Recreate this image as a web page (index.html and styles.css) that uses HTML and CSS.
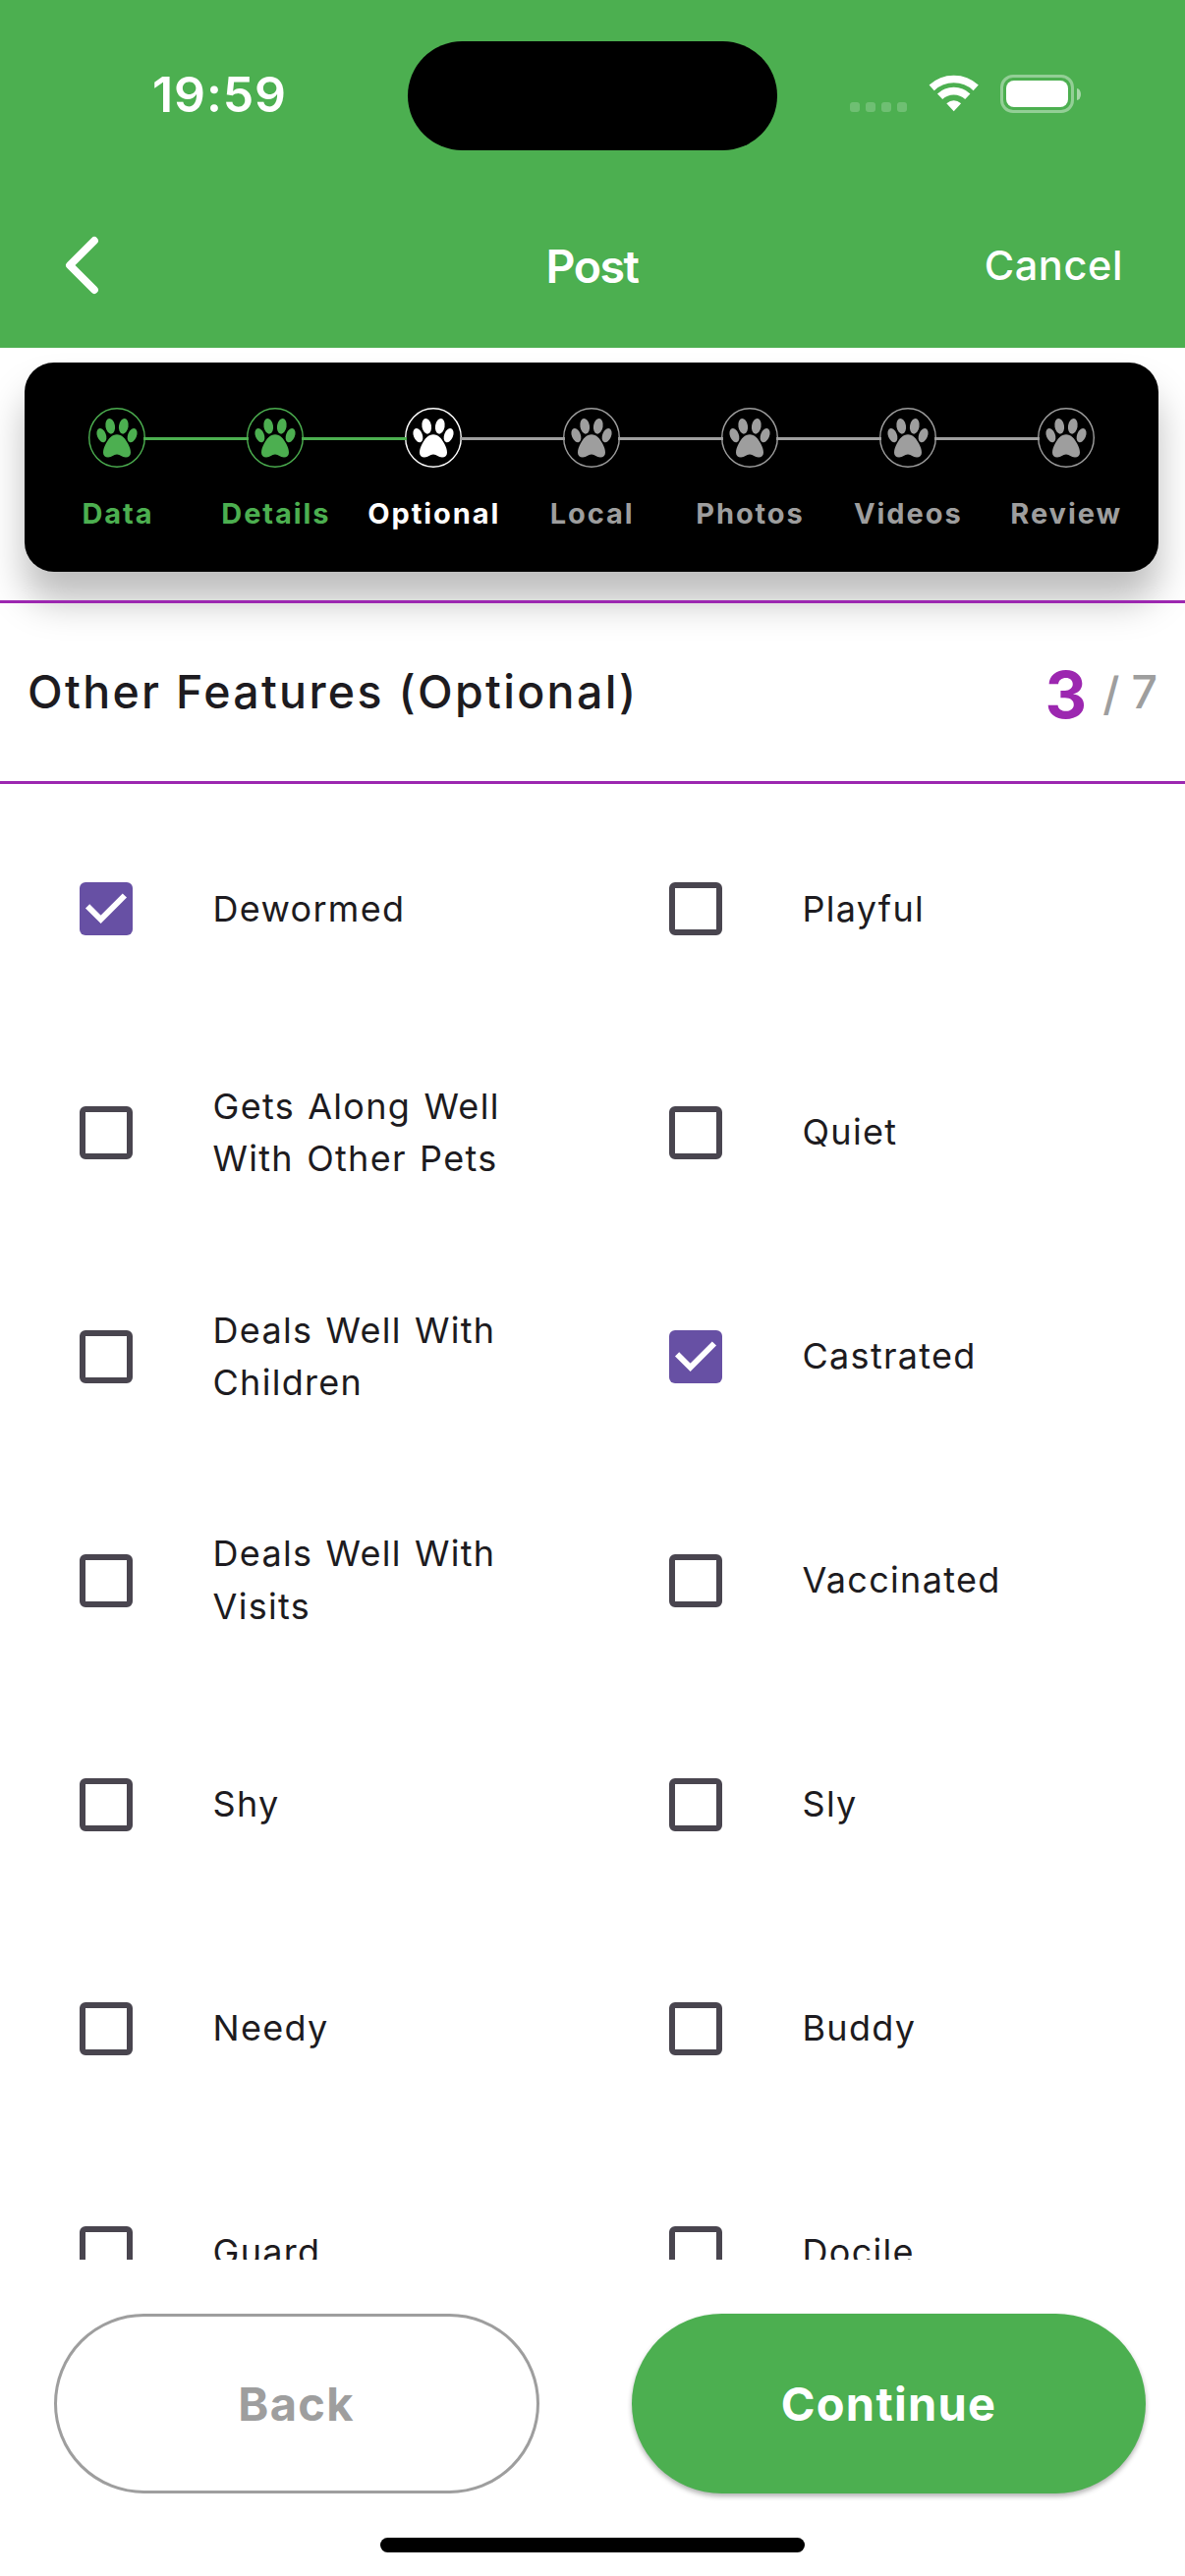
FILE: index.html
```html
<!DOCTYPE html>
<html lang="en">
<head>
<meta charset="utf-8">
<title>Post</title>
<link rel="stylesheet" href="styles.css">
</head>
<body>
<svg width="0" height="0" class="defs">
  <symbol id="paw" viewBox="0 0 58 61">
    <ellipse cx="29" cy="30.5" rx="28.3" ry="29.7" fill="none" stroke="currentColor" stroke-width="1.4"/>
    <g fill="currentColor">
      <ellipse cx="13.4" cy="28.1" rx="4.5" ry="7.4" transform="rotate(-22 13.4 28.1)"/>
      <ellipse cx="22.2" cy="18.8" rx="4.8" ry="7.9" transform="rotate(-9 22.2 18.8)"/>
      <ellipse cx="35.8" cy="18.8" rx="4.8" ry="7.9" transform="rotate(9 35.8 18.8)"/>
      <ellipse cx="44.6" cy="28.1" rx="4.5" ry="7.4" transform="rotate(22 44.6 28.1)"/>
      <path d="M29 27.3C24 27.3 20.4 31.5 17.8 36.6C16 40 15 43 15 45.8C15 49 17 50.6 20 50.6C24 50.6 25.5 47.6 29 47.6C32.500 47.600 34 50.600 38 50.600C41 50.600 43 49 43 45.800C43 43 42 40 40.200 36.600C37.600 31.500 34 27.300 29 27.300Z"/>
    </g>
  </symbol>
</svg>
<div class="screen">
  <header class="top">
    <div class="status">
      <div class="time">19:59</div>
      <div class="island"></div>
      <div class="indicators">
        <div class="dots"><i></i><i></i><i></i><i></i></div>
        <svg class="wifi" width="52" height="38" viewBox="0 0 52 38">
          <g fill="none" stroke="#fff" stroke-width="7.6">
            <path d="M3.200 13.400A33 33 0 0 1 48.200 13.400"/>
            <path d="M11.600 22.200A20.500 20.500 0 0 1 39.800 22.200"/>
          </g>
          <path d="M18.300 29.300Q25.700 23 33.100 29.300L25.700 37.300Z" fill="#fff"/>
        </svg>
        <div class="battery"><div class="shell"><div class="charge"></div></div><div class="nub"></div></div>
      </div>
    </div>
    <nav class="nav">
      <svg class="back-icon" width="40" height="64" viewBox="0 0 40 64"><path d="M34 7L9 32L34 57" fill="none" stroke="#fff" stroke-width="7.800" stroke-linecap="round" stroke-linejoin="round"/></svg>
      <h1 class="nav-title">Post</h1>
      <div class="cancel">Cancel</div>
    </nav>
  </header>

  <div class="stepper-wrap">
    <div class="stepper">
      <div class="step done"><div class="track"><b class="none"></b><svg class="paw"><use href="#paw"/></svg><b></b></div><span>Data</span></div>
      <div class="step done"><div class="track"><b></b><svg class="paw"><use href="#paw"/></svg><b></b></div><span>Details</span></div>
      <div class="step current"><div class="track"><b></b><svg class="paw"><use href="#paw"/></svg><b></b></div><span>Optional</span></div>
      <div class="step"><div class="track"><b></b><svg class="paw"><use href="#paw"/></svg><b></b></div><span>Local</span></div>
      <div class="step"><div class="track"><b></b><svg class="paw"><use href="#paw"/></svg><b></b></div><span>Photos</span></div>
      <div class="step"><div class="track"><b></b><svg class="paw"><use href="#paw"/></svg><b></b></div><span>Videos</span></div>
      <div class="step"><div class="track"><b></b><svg class="paw"><use href="#paw"/></svg><b class="none"></b></div><span>Review</span></div>
    </div>
  </div>

  <section class="section-head">
    <h2>Other Features (Optional)</h2>
    <div class="count"><strong>3</strong><span class="slash">/</span><span class="total">7</span></div>
  </section>

  <main class="list">
    <div class="option"><div class="box checked"><svg width="54" height="54"><path d="M8.100 24.300L21.600 37.800L45.900 13.500"/></svg></div><p>Dewormed</p></div>
    <div class="option"><div class="box"></div><p>Playful</p></div>
    <div class="option"><div class="box"></div><p>Gets Along Well<br>With Other Pets</p></div>
    <div class="option"><div class="box"></div><p>Quiet</p></div>
    <div class="option"><div class="box"></div><p>Deals Well With<br>Children</p></div>
    <div class="option"><div class="box checked"><svg width="54" height="54"><path d="M8.100 24.300L21.600 37.800L45.900 13.500"/></svg></div><p>Castrated</p></div>
    <div class="option"><div class="box"></div><p>Deals Well With<br>Visits</p></div>
    <div class="option"><div class="box"></div><p>Vaccinated</p></div>
    <div class="option"><div class="box"></div><p>Shy</p></div>
    <div class="option"><div class="box"></div><p>Sly</p></div>
    <div class="option"><div class="box"></div><p>Needy</p></div>
    <div class="option"><div class="box"></div><p>Buddy</p></div>
    <div class="option"><div class="box"></div><p>Guard</p></div>
    <div class="option"><div class="box"></div><p>Docile</p></div>
  </main>

  <footer class="footer">
    <div class="actions">
      <div class="btn btn-back">Back</div>
      <div class="btn btn-continue">Continue</div>
    </div>
    <div class="home"></div>
  </footer>
</div>
</body>
</html>
```
FILE: styles.css
```css
* { box-sizing: border-box; }
body { margin: 0; background: #fff; font-family: Inter, "Liberation Sans", sans-serif; color: #1d1b20; }
h1, h2, p { margin: 0; font-weight: inherit; }
.defs { display: block; height: 0; }
.screen { width: 1206px; height: 2622px; display: flex; flex-direction: column; overflow: hidden; }

.top { height: 354px; flex: none; background: #4caf50; color: #fff; }
.status { height: 194px; padding-top: 41px; display: flex; align-items: flex-start; }
.time { width: 260px; margin-left: 155px; font-size: 50px; font-weight: 600; letter-spacing: .9px; line-height: 110px; }
.island { width: 376px; height: 111px; margin-top: .5px; border-radius: 56px; background: #000; }
.indicators { display: flex; padding: 35px 0 0 74px; }
.dots { display: flex; gap: 6px; padding-top: 28px; }
.dots i { width: 10px; height: 10px; border-radius: 3px; background: rgba(255,255,255,.2); }
.wifi { margin: 0 0 0 22px; display: block; }
.battery { display: flex; align-items: center; gap: 3px; height: 39px; margin-left: 21px; }
.shell { width: 75px; height: 39px; padding: 3px; border: 3px solid rgba(255,255,255,.4); border-radius: 13px; }
.charge { height: 27px; border-radius: 8px; background: #fff; }
.nub { width: 4px; height: 12px; border-radius: 0 4px 4px 0 / 0 6px 6px 0; background: rgba(255,255,255,.5); }

.nav { height: 152px; display: grid; grid-template-columns: 1fr auto 1fr; align-items: center; padding: 0 63px 0 62px; }
.nav-title { font-size: 46.500px; font-weight: 600; letter-spacing: -1.500px; line-height: 58px; padding-top: 1px; }
.cancel { justify-self: end; font-size: 41.500px; font-weight: 450; letter-spacing: .6px; line-height: 52px; }

.stepper-wrap { height: 257px; flex: none; padding: 15.300px 27px 0 25px; }
.stepper { height: 212.500px; padding: 45.700px 14px 0; display: flex; border-radius: 30px; background: #000; box-shadow: 0 30px 38px rgba(0,0,0,.26); }
.step { flex: 1 1 0; min-width: 0; display: flex; flex-direction: column; align-items: center; gap: 27px; color: #9e9e9e; font-size: 29px; font-weight: 650; letter-spacing: 1.900px; line-height: 40px; }
.step span { margin-right: -1.200px; }
.track { display: flex; align-items: center; align-self: stretch; height: 61px; }
.track b { flex: 1; height: 3px; margin-top: 3px; background: #9e9e9e; z-index: 1; }
.track b.none { visibility: hidden; }
.paw { width: 58px; height: 61px; margin: 0 -2px; flex: none; }
.done { color: #4caf50; }
.done .track b, .current .track b:first-child { background: #4caf50; }
.current { color: #fff; }

.section-head { height: 187px; flex: none; padding: 0 28px 1px; border-top: 3px solid #9c27b0; border-bottom: 3px solid #9c27b0; display: flex; align-items: center; justify-content: space-between; }
.section-head h2 { font-size: 46.500px; font-weight: 530; letter-spacing: 2.320px; line-height: 60px; }
.count { display: flex; align-items: center; font-size: 46.500px; font-weight: 500; color: #9e9e9e; line-height: 60px; }
.count strong { font-size: 66px; font-weight: 700; line-height: 60px; color: #9c27b0; padding-top: 5px; margin-right: 16px; }
.count .slash { padding-top: 3px; }
.count .total { margin-left: 12px; }

.list { height: 1502px; flex: none; padding-top: 13.500px; overflow: hidden; display: grid; grid-template-columns: 600px 606px; grid-auto-rows: 227.900px; align-content: start; }
.option { display: flex; align-items: center; gap: 81.500px; padding-left: 81px; font-size: 36px; letter-spacing: 1.300px; word-spacing: 1.800px; line-height: 53.700px; }
.box { width: 54px; height: 54px; flex: none; border: 6px solid #49454f; border-radius: 6px; }
.box.checked { border: 0; background: #6750a4; }
.box svg { display: block; fill: none; stroke: #fff; stroke-width: 6; }

.footer { flex: 1; padding-top: 54.500px; display: flex; flex-direction: column; align-items: center; }
.actions { display: flex; align-self: stretch; justify-content: space-between; padding: 0 40px 0 54.500px; }
.btn { height: 183px; border-radius: 92px; display: flex; align-items: center; justify-content: center; font-size: 47px; font-weight: 700; letter-spacing: 1.300px; }
.btn-back { width: 494px; border: 3px solid #9e9e9e; color: #9e9e9e; }
.btn-continue { width: 523px; background: #4caf50; color: #fff; box-shadow: 0 3px 5px rgba(0,0,0,.3); }
.home { width: 432px; height: 15px; margin-top: 45.500px; border-radius: 8px; background: #000; }
```
